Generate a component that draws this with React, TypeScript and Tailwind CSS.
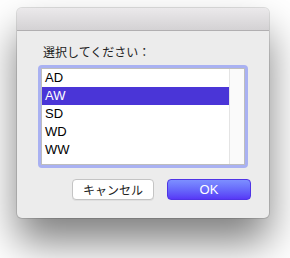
export default function App() {
  const items = ["AD", "AW", "SD", "WD", "WW"];
  const selected = "AW";

  return (
    <div className="w-[290px] h-[258px] bg-white pt-[8px] pl-[17px] overflow-hidden">
      {/* Window */}
      <div className="w-[252px] h-[210px] rounded-[5px] bg-[#ececec] flex flex-col shadow-[0_0_0_1px_rgba(0,0,0,0.12),0_24px_40px_rgba(0,0,0,0.5)] font-['Liberation_Sans','Noto_Sans_CJK_JP',sans-serif]">
        {/* Title bar */}
        <div className="h-[23px] rounded-t-[5px] bg-gradient-to-b from-[#ebe9eb] to-[#d4d2d4] border-b border-[#b1afb1]" />

        {/* Body */}
        <div className="flex flex-col px-[21px]">
          <div className="mt-[13px] pl-[5px] h-[16px] text-[12px] leading-[16px] text-[#222] font-['Noto_Sans_CJK_JP',sans-serif]">
            選択してください：
          </div>

          {/* List box */}
          <div className="mt-[5px] w-[210px] h-[103px] rounded-[4px] border-[3px] border-[#a9b1f2]">
            <div className="h-full border border-[#bdbdbd] bg-white flex">
              <div className="flex-1 flex flex-col">
                {items.map((it) => (
                  <div
                    key={it}
                    className={`h-[18px] pl-[3px] text-[13px] leading-[18px] ${
                      it === selected
                        ? "bg-[#4a35d7] text-white"
                        : "text-black"
                    }`}
                  >
                    {it}
                  </div>
                ))}
              </div>
              <div className="w-[15px] bg-[#fafafa] border-l border-[#e4e4e4]" />
            </div>
          </div>

          {/* Buttons */}
          <div className="mt-[11px] flex justify-end gap-[13px] mr-[-3px]">
            <button className="w-[82px] h-[21px] rounded-[4px] bg-white border border-[#c4c4c4] text-[12px] leading-[19px] text-[#222] font-['Noto_Sans_CJK_JP',sans-serif] shadow-[0_1px_0_rgba(0,0,0,0.05)]">
              キャンセル
            </button>
            <button className="w-[84px] h-[21px] rounded-[4px] bg-gradient-to-b from-[#7d8fff] to-[#5837f6] border border-[#4f34e6] text-[13px] leading-[19px] text-white">
              OK
            </button>
          </div>
        </div>
      </div>
    </div>
  );
}
